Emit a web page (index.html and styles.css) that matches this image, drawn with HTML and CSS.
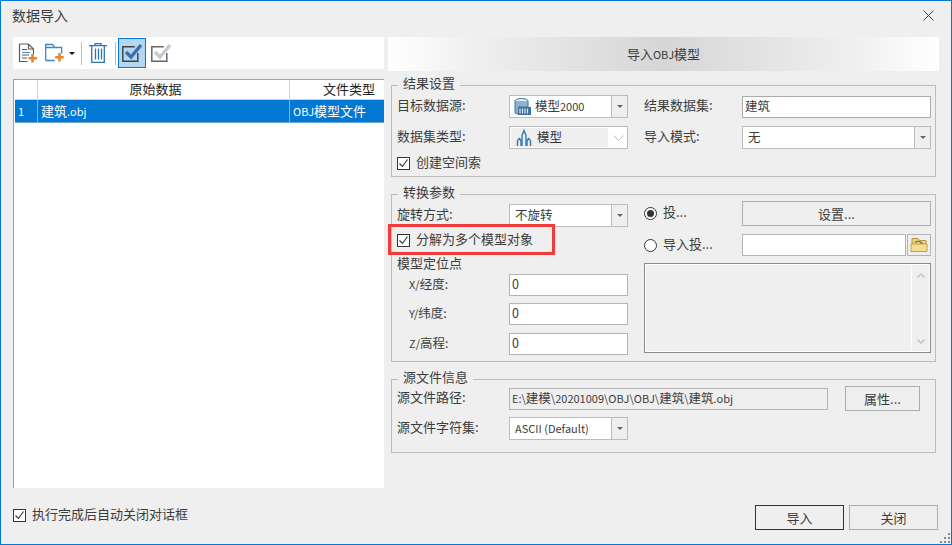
FILE: index.html
```html
<!DOCTYPE html>
<html lang="zh-CN">
<head>
<meta charset="utf-8">
<title>数据导入</title>
<link rel="stylesheet" href="styles.css">
</head>
<body>
<div class="window">
  <header class="titlebar">
    <span class="title">数据导入</span>
    <svg class="close" width="11" height="11" viewBox="0 0 11 11"><path d="M.5.5l10 10M10.500.5l-10 10" stroke="#444" fill="none"/></svg>
  </header>
  <main class="main">
    <section class="left">
      <div class="toolbar">
        <svg class="tool t-doc" width="20" height="21" viewBox="0 0 20 21"><path d="M1.500 1h9l5 5v5M10.500 1v5h5M1.500 1v17.500h8" fill="none" stroke="#5a5a5a" stroke-width="1.200"/><path d="M4 6.500h5M4 12h7M4 15h5" stroke="#5a5a5a"/><path d="M4 9.500h8" stroke="#4f8fc4"/><path d="M14.500 11v8.500M10.500 15.200h8.500" stroke="#e08a2e" stroke-width="2.600"/></svg>
        <svg class="tool t-folder" width="20" height="20" viewBox="0 0 20 20"><path d="M.7 17.500V1.500h7l2 3h7v6M.7 4.500h9M.7 17.500h9" fill="none" stroke="#3f87c2" stroke-width="1.300"/><path d="M14.500 10v8.500M10.200 14.200h8.500" stroke="#e08a2e" stroke-width="2.600"/></svg>
        <span class="caret dark"></span>
        <span class="sep"></span>
        <svg class="tool t-trash" width="18" height="20" viewBox="0 0 18 20"><path d="M0 2.700h18M6 2.700V.7h6v2M2.700 2.700v16.600h12.600V2.700M6.500 5.500v11M9.500 5.500v11M12.500 5.500v11" fill="none" stroke="#2f74b0" stroke-width="1.300"/></svg>
        <span class="sep"></span>
        <span class="tool-on">
          <svg width="20" height="20" viewBox="0 0 20 20"><path d="M15.800 10v8.300H.8V3.800h12" fill="none" stroke="#444" stroke-width="1.500"/><path d="M4 9l5 5L19 2" fill="none" stroke="#3d70ab" stroke-width="3.400"/></svg>
        </span>
        <svg class="tool t-check" width="20" height="20" viewBox="0 0 20 20"><path d="M15.800 10v8.300H.8V3.800h12" fill="none" stroke="#666" stroke-width="1.500"/><path d="M4 9l5 5L19 2" fill="none" stroke="#c3cad4" stroke-width="3.400"/></svg>
      </div>
      <div class="table">
        <div class="thead">
          <span class="c0"></span>
          <span class="c1 th1">原始数据</span>
          <span class="c2 th2">文件类型</span>
        </div>
        <div class="trow">
          <span class="c0 rownum">1</span>
          <span class="c1">建筑<span class="lat">.obj</span></span>
          <span class="c2"><span class="lat">OBJ</span>模型文件</span>
        </div>
      </div>
    </section>

    <section class="right">
      <div class="banner">导入<span class="lat">OBJ</span>模型</div>

      <fieldset class="group g1">
        <legend>结果设置</legend>
        <div class="grid4">
          <label>目标数据源:</label>
          <div class="combo">
            <div class="value">
              <svg class="ico-db" width="17" height="17" viewBox="0 0 17 17"><ellipse cx="7.500" cy="3" rx="6.500" ry="2.500" fill="#e4edf5" stroke="#3f77a8"/><path d="M1 3v12l4 1.500V9h9V3" fill="#8fb2d2" stroke="#3f77a8"/><rect x="4" y="9" width="13" height="8" fill="#3f6f9e"/><path d="M6 10.500v5M8.500 10.500v5M11 10.500v5M13.500 10.500v5" stroke="#dfe8f0" stroke-width="1.200"/></svg>
              <span>模型<span class="lat">2000</span></span>
            </div>
            <span class="arrow"><span class="caret"></span></span>
          </div>
          <label class="far">结果数据集:</label>
          <div class="input strong">建筑</div>

          <label>数据集类型:</label>
          <div class="combo disabled">
            <div class="value">
              <svg class="ico-model" width="16" height="18" viewBox="0 0 16 18"><path d="M1.500 17v-5.500L3.500 9.500 5 12v5M6 17V6.500L8 1.500l2 5V17M11 17v-5l1.500-2.500 2 2V17" fill="none" stroke="#3f80bd" stroke-width="1.500"/></svg>
              <span>模型</span>
            </div>
            <svg class="chev" width="11" height="6" viewBox="0 0 11 6"><path d="M.5.500l5 5 5-5" fill="none" stroke="#bdbdbd"/></svg>
          </div>
          <label class="far">导入模式:</label>
          <div class="combo">
            <div class="value pad"><span>无</span></div>
            <span class="arrow"><span class="caret"></span></span>
          </div>

          <div class="check span2"><span class="box"><svg width="11" height="11" viewBox="0 0 11 11"><path d="M1.500 5.500l3 3 5-7" fill="none" stroke="#333" stroke-width="1.100"/></svg></span><span class="t">创建空间索</span></div>
        </div>
      </fieldset>

      <fieldset class="group g2">
        <legend>转换参数</legend>
        <div class="split">
          <div class="col-left">
            <div class="line">
              <label>旋转方式:</label>
              <div class="combo">
                <div class="value pad"><span>不旋转</span></div>
                <span class="arrow"><span class="caret"></span></span>
              </div>
            </div>
            <div class="check marked"><span class="box"><svg width="11" height="11" viewBox="0 0 11 11"><path d="M1.500 5.500l3 3 5-7" fill="none" stroke="#333" stroke-width="1.100"/></svg></span><span class="t">分解为多个模型对象</span><span class="redbox"></span></div>
            <div class="sub">模型定位点</div>
            <div class="line tight"><label class="indent"><span class="lat">X/</span>经度:</label><div class="input">0</div></div>
            <div class="line tight second-row"><label class="indent"><span class="lat">Y/</span>纬度:</label><div class="input">0</div></div>
            <div class="line"><label class="indent"><span class="lat">Z/</span>高程:</label><div class="input">0</div></div>
          </div>
          <div class="col-right">
            <div class="rline">
              <div class="radio"><span class="circle on"></span><span class="t">投...</span></div>
              <button class="btn wide">设置...</button>
            </div>
            <div class="rline second">
              <div class="radio"><span class="circle"></span><span class="t">导入投...</span></div>
              <div class="pathpick">
                <div class="input grow"></div>
                <span class="folderbtn">
                  <svg width="18" height="16" viewBox="0 0 18 16"><path d="M2 14V1.500h6l1.500 2H16V14z" fill="#f0cf7a" stroke="#b8923c"/><path d="M1 14.500V7h16v7.500z" fill="#f8dd90" stroke="#c49f48"/><path d="M5 5.500q3-2.500 6 0l1.500 1" fill="none" stroke="#3f6f9e" stroke-width="1.200"/></svg>
                </span>
              </div>
            </div>
            <div class="memo">
              <div class="scroll">
                <svg width="8" height="5" viewBox="0 0 8 5"><path d="M.5 4.500L4 1l3.500 3.500" fill="none" stroke="#c4c4c4" stroke-width="1.500"/></svg>
                <svg width="8" height="5" viewBox="0 0 8 5"><path d="M.5.500L4 4 7.500.500" fill="none" stroke="#c4c4c4" stroke-width="1.500"/></svg>
              </div>
            </div>
          </div>
        </div>
      </fieldset>

      <fieldset class="group g3">
        <legend>源文件信息</legend>
        <div class="grid3">
          <label>源文件路径:</label>
          <div class="input readonly"><span class="lat">E:\</span>建模<span class="lat">\20201009\OBJ\OBJ\</span>建筑<span class="lat">\</span>建筑<span class="lat">.obj</span></div>
          <button class="btn prop">属性...</button>
          <label>源文件字符集:</label>
          <div class="combo small">
            <div class="value pad"><span class="lat">ASCII (Default)</span></div>
            <span class="arrow"><span class="caret"></span></span>
          </div>
        </div>
      </fieldset>
    </section>
  </main>
  <footer class="footer">
    <div class="check"><span class="box"><svg width="11" height="11" viewBox="0 0 11 11"><path d="M1.500 5.500l3 3 5-7" fill="none" stroke="#333" stroke-width="1.100"/></svg></span><span class="t">执行完成后自动关闭对话框</span></div>
    <div class="actions">
      <button class="btn action primary">导入</button>
      <button class="btn action">关闭</button>
    </div>
  </footer>
  <svg class="grip" width="11" height="11" viewBox="0 0 11 11"><path d="M8 0h2v2H8zM4 4h2v2H4zM8 4h2v2H8zM0 8h2v2H0zM4 8h2v2H4zM8 8h2v2H8z" fill="#888"/></svg>
</div>
</body>
</html>
```

FILE: styles.css
```css
* { box-sizing: border-box; }
html, body { margin: 0; padding: 0; }
body {
  font-family: "Noto Sans CJK SC", "Noto Sans", sans-serif;
  font-size: 13px;
  color: #3c3c3c;
  line-height: 16px;
}
.lat { font-size: 11px; }
.window {
  position: relative;
  width: 952px;
  height: 545px;
  background: #efefef;
  border: 1px solid #0078d4;
  display: flex;
  flex-direction: column;
  overflow: hidden;
}
.titlebar {
  height: 36px;
  flex: none;
  display: flex;
  align-items: center;
  justify-content: space-between;
  padding: 0 17px 8px 11px;
}
.title { font-size: 14px; line-height: 20px; }
.main {
  height: 451px;
  flex: none;
  display: flex;
  gap: 4px;
  padding-left: 12px;
}
.left { width: 371px; flex: none; display: flex; flex-direction: column; gap: 10px; }
.toolbar {
  height: 32px;
  flex: none;
  background: #fff;
  border-radius: 2px;
  display: flex;
  align-items: center;
  padding-left: 5px;
}
.t-doc { margin-right: 7px; }
.t-folder { margin-right: 4px; }
.caret {
  display: block;
  width: 0;
  height: 0;
  border-left: 3px solid transparent;
  border-right: 3px solid transparent;
  border-top: 3px solid #666;
}
.caret.dark { border-top-color: #111; margin-right: -2px; }
.sep { width: 1px; height: 23px; background: #bdbdbd; margin-left: 8px; margin-right: 7px; }
.tool-on {
  width: 28px;
  height: 30px;
  margin-left: -5px;
  background: #b3d7f3;
  border: 1px solid #0078d4;
  display: flex;
  align-items: center;
  justify-content: center;
  margin-right: 5px;
}
.table {
  flex: 1;
  background: #fff;
  border-left: 1px solid #a0a0a0;
  border-top: 1px solid #a0a0a0;
  padding-left: 1px;
  overflow: hidden;
}
.thead, .trow { display: flex; width: 369px; }
.thead { height: 20px; border-bottom: 1px solid #d0d0d0; line-height: 18px; color: #222; }
.trow { height: 23px; background: #0078d4; color: #fff; line-height: 22px; border-bottom: 1px solid #6fa9d8; }
.c0 { width: 23px; flex: none; border-right: 1px solid #d0d0d0; }
.c1 { width: 252px; flex: none; border-right: 1px solid #d0d0d0; padding-left: 3px; }
.c2 { flex: 1; white-space: nowrap; padding-left: 3px; }
.trow .c0, .trow .c1 { border-right-color: #7fb3de; }
.rownum { padding-left: 3px; font-size: 11px; }
.th1 { text-align: center; padding: 0 16px 0 0; }
.th2 { padding-left: 33px; }

.right { width: 551px; flex: none; }
.banner {
  height: 34px;
  background: linear-gradient(90deg, #fff 0%, #efefef 16%, #d6d6d6 50%, #efefef 84%, #fff 100%);
  text-align: center;
  line-height: 34px;
}
.group {
  margin: 0 3px;
  border: 1px solid #bcbcbc;
  padding: 0 4px 6px 5px;
  min-width: 0;
}
.group legend {
  margin-left: 1px;
  padding: 0 5px 4px;
  height: 14px;
  line-height: 10px;
}
.g1 { margin-top: 7px; padding-top: 3px; }
.g2 { margin-top: 10px; }
.g3 { margin-top: 11px; padding-top: 1px; padding-bottom: 12px; }
.g3 legend { height: 12px; line-height: 8px; }

.grid4 {
  display: grid;
  grid-template-columns: 112px 119px 114px 189px;
  row-gap: 8px;
  align-items: center;
}
.far { padding-left: 16px; }
.span2 { grid-column: 1 / 3; height: 13px; }
label { white-space: nowrap; padding-bottom: 3px; }

.combo {
  height: 23px;
  border: 1px solid #bcbcbc;
  background: #fff;
  display: flex;
  align-items: stretch;
}
.value { flex: 1; display: flex; align-items: center; white-space: nowrap; padding-left: 4px; font-size: 12.500px; }
.value > span { margin-top: -2px; }
.value.pad { padding-left: 5px; }
.ico-db { margin-right: 4px; }
.ico-model { margin-right: 5px; margin-left: 5px; }
.arrow {
  width: 16px;
  flex: none;
  border-left: 1px solid #bcbcbc;
  background: #efefef;
  display: flex;
  align-items: center;
  justify-content: center;
}
.disabled { padding: 1px; }
.disabled .value { flex: none; width: 97px; background: #efefef; padding-left: 0; color: #333; }
.chev { align-self: center; margin-left: 5px; }

.input {
  height: 22px;
  border: 1px solid #b4b4b4;
  background: #fff;
  line-height: 17px;
  padding: 0 2px;
  font-size: 12.500px;
  white-space: nowrap;
}
.input.strong { border-color: #ababab; }
.readonly { background: #efefef; font-size: 12.500px; }
.readonly .lat { font-size: 11px; }

.check { display: flex; align-items: center; white-space: nowrap; }
.t { margin-top: -3px; }
.box {
  width: 13px;
  height: 13px;
  flex: none;
  border: 1px solid #333;
  background: #fff;
  margin-right: 6px;
  display: flex;
}
.box svg { display: block; }

.split { display: flex; }
.col-left { width: 231px; flex: none; padding-top: 3px; }
.col-right { margin-left: 16px; width: 287px; }
.line { display: grid; grid-template-columns: 112px 119px; align-items: center; }
.line.tight { margin-bottom: 7px; }
.line.second-row { margin-bottom: 8px; }
.indent { padding-left: 12px; font-size: 12.500px; }
.marked { position: relative; margin-top: 7px; height: 13px; }
.redbox {
  position: absolute;
  left: -9px;
  top: -10px;
  width: 167px;
  height: 31px;
  border: 3px solid #f23c3c;
}
.sub { height: 20px; margin-top: 7px; line-height: 18px; }

.rline { display: grid; grid-template-columns: 98px 189px; align-items: center; }
.rline.second { margin-top: 8px; }
.radio { display: flex; align-items: center; white-space: nowrap; }
.circle {
  width: 13px;
  height: 13px;
  border: 1px solid #333;
  border-radius: 50%;
  background: #fff;
  margin-right: 6px;
  display: flex;
  align-items: center;
  justify-content: center;
  flex: none;
}
.circle.on::after { content: ""; width: 7px; height: 7px; border-radius: 50%; background: #333; }
.btn {
  font: inherit;
  color: inherit;
  background: #efefef;
  border: 1px solid #adadad;
  padding: 0;
}
.wide { height: 25px; }
.pathpick { display: flex; height: 22px; }
.grow { flex: 1; }
.folderbtn {
  width: 24px;
  flex: none;
  margin-left: 1px;
  border: 1px solid #b4b4b4;
  background: #efefef;
  display: flex;
  align-items: center;
  justify-content: center;
}
.memo {
  height: 90px;
  margin-top: 7px;
  border: 1px solid #8a8a8a;
  box-shadow: inset 0 0 0 1px #fff;
  background: #efefef;
  display: flex;
  justify-content: flex-end;
  padding: 1px;
}
.scroll {
  width: 18px;
  border-left: 1px solid #fff;
  display: flex;
  flex-direction: column;
  justify-content: space-between;
  align-items: center;
  padding: 8px 0 7px;
}

.grid3 {
  display: grid;
  grid-template-columns: 112px 319px auto;
  grid-template-rows: 25px 23px;
  row-gap: 6px;
  align-items: center;
}
.prop { margin-left: 17px; width: 75px; height: 25px; }
.grid3 .small { width: 119px; }

.footer {
  flex: 1;
  display: flex;
  justify-content: space-between;
  align-items: flex-start;
  padding: 17px 13px 0 12px;
}
.footer .check { margin-top: 4px; }
.actions { display: flex; gap: 5px; }
.action { width: 89px; height: 25px; }
.primary { border-color: #333; }
.grip { position: absolute; right: 0; bottom: 0; }
```
